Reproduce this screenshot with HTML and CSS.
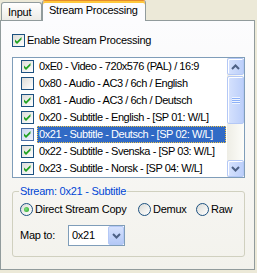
FILE: index.html
```html
<!DOCTYPE html>
<html lang="en">
<head>
    <meta charset="UTF-8">
    <title>Stream Processing</title>
    <link rel="stylesheet" href="styles.css">
</head>
<body>

<div class="tabs">
    <div class="tab">Input</div>
    <div class="tab active">Stream Processing</div>
</div>

<div class="panel">
    <div class="check-row">
        <span class="cb checked"><svg viewBox="0 0 11 11"><polygon points="2,4.5 4,6.5 8.5,2 8.5,4.5 4,9 2,7"/></svg></span>
        <span>Enable Stream Processing</span>
    </div>

    <div class="listbox">
        <ul class="items">
            <li><span class="cb checked"><svg viewBox="0 0 11 11"><polygon points="2,4.5 4,6.5 8.5,2 8.5,4.5 4,9 2,7"/></svg></span><span class="label">0xE0 - Video - 720x576 (PAL) / 16:9</span></li>
            <li><span class="cb"></span><span class="label">0x80 - Audio - AC3 / 6ch / English</span></li>
            <li><span class="cb checked"><svg viewBox="0 0 11 11"><polygon points="2,4.5 4,6.5 8.5,2 8.5,4.5 4,9 2,7"/></svg></span><span class="label">0x81 - Audio - AC3 / 6ch / Deutsch</span></li>
            <li><span class="cb checked"><svg viewBox="0 0 11 11"><polygon points="2,4.5 4,6.5 8.5,2 8.5,4.5 4,9 2,7"/></svg></span><span class="label">0x20 - Subtitle - English - [SP 01: W/L]</span></li>
            <li class="selected"><span class="cb checked"><svg viewBox="0 0 11 11"><polygon points="2,4.5 4,6.5 8.5,2 8.5,4.5 4,9 2,7"/></svg></span><span class="label">0x21 - Subtitle - Deutsch - [SP 02: W/L]</span></li>
            <li><span class="cb checked"><svg viewBox="0 0 11 11"><polygon points="2,4.5 4,6.5 8.5,2 8.5,4.5 4,9 2,7"/></svg></span><span class="label">0x22 - Subtitle - Svenska - [SP 03: W/L]</span></li>
            <li><span class="cb checked"><svg viewBox="0 0 11 11"><polygon points="2,4.5 4,6.5 8.5,2 8.5,4.5 4,9 2,7"/></svg></span><span class="label">0x23 - Subtitle - Norsk - [SP 04: W/L]</span></li>
        </ul>
        <div class="scrollbar">
            <div class="sb-btn"><svg viewBox="0 0 9 6"><polyline points="1,5 4.5,1.5 8,5"/></svg></div>
            <div class="sb-thumb"><span class="grip"></span></div>
            <div class="sb-track"></div>
            <div class="sb-btn"><svg viewBox="0 0 9 6"><polyline points="1,1 4.5,4.5 8,1"/></svg></div>
        </div>
    </div>

    <fieldset class="group">
        <legend>Stream: 0x21 - Subtitle</legend>
        <div class="radios">
            <div class="radio-item"><span class="rb on"></span>Direct Stream Copy</div>
            <div class="radio-item"><span class="rb"></span>Demux</div>
            <div class="radio-item"><span class="rb"></span>Raw</div>
        </div>
        <div class="map-row">
            <span class="map-label">Map to:</span>
            <div class="combo">
                <span class="combo-value">0x21</span>
                <span class="combo-btn"><svg viewBox="0 0 9 6"><polyline points="1,1 4.5,4.5 8,1"/></svg></span>
            </div>
        </div>
    </fieldset>
</div>

</body>
</html>
```

FILE: styles.css
```css
* {
    margin: 0;
    padding: 0;
    box-sizing: border-box;
}

body {
    background-color: #ece9d8;
    font-family: "Liberation Sans", Arial, sans-serif;
    font-size: 11px;
    line-height: 13px;
    letter-spacing: -0.25px;
    color: #000;
    width: 257px;
    height: 273px;
    overflow: hidden;
}

/* tab strip */
.tabs {
    display: flex;
    align-items: flex-end;
    height: 20px;
    padding-left: 1px;
}

.tab {
    width: 41px;
    height: 18px;
    padding: 3px 0 0 6px;
    border: 1px solid #919b9c;
    border-bottom: none;
    border-radius: 3px 3px 0 0;
    background: linear-gradient(#ffffff, #ecebe6);
}

.tab.active {
    position: relative;
    z-index: 1;
    width: 104px;
    height: 21px;
    margin-bottom: -1px;
    padding: 3px 0 0 6px;
    border-top: 1px solid #e68b2c;
    background: #fcfcfe;
    box-shadow: inset 0 2px 0 #ffc83c;
}

/* tab page */
.panel {
    width: 255px;
    height: 250px;
    padding: 13px 0 0 11px;
    border: 1px solid #919b9c;
    background: linear-gradient(#fcfcfe, #f3f2ec);
}

.check-row {
    display: flex;
    align-items: center;
    gap: 2px;
    height: 13px;
}

.cb {
    display: inline-block;
    flex: none;
    width: 13px;
    height: 13px;
    border: 1px solid #1c5180;
    background: linear-gradient(135deg, #dcdcd7, #ffffff);
}

.cb svg {
    display: block;
    width: 11px;
    height: 11px;
    fill: #21a121;
}

/* list with checkboxes */
.listbox {
    display: flex;
    width: 233px;
    height: 121px;
    margin-top: 10px;
    border: 1px solid #7f9db9;
    background: #fff;
}

.items {
    list-style: none;
    width: 214px;
    letter-spacing: -0.45px;
}

.items li {
    display: flex;
    align-items: center;
    height: 17px;
    padding-left: 8px;
}

.items .label {
    width: 189px;
    height: 17px;
    margin-left: 3px;
    padding: 2px 0 0 2px;
    white-space: nowrap;
}

.items li.selected .label {
    background: #316ac5;
    color: #fff;
    outline: 1px dotted #f0c44a;
    outline-offset: -1px;
}

.items li.selected .cb {
    border-color: #4a6fa8;
    background: linear-gradient(135deg, #c9d6ee, #eef2fb);
}

.scrollbar {
    display: flex;
    flex-direction: column;
    width: 17px;
    background: linear-gradient(to right, #eeede5, #fdfdfa);
}

.sb-btn,
.sb-thumb {
    border: 1px solid #b4c8f6;
    border-radius: 2px;
    background: linear-gradient(to right, #d6e2fd, #bccffa);
    box-shadow: inset 1px 1px 0 #ffffff;
}

.sb-btn {
    display: flex;
    align-items: center;
    justify-content: center;
    height: 17px;
}

.sb-btn svg {
    width: 9px;
    height: 6px;
    fill: none;
    stroke: #4d6185;
    stroke-width: 2;
}

.sb-thumb {
    display: flex;
    align-items: center;
    justify-content: center;
    height: 48px;
    margin-top: 1px;
}

.grip {
    width: 8px;
    height: 7px;
    background: repeating-linear-gradient(#eef4fe 0 1px, #8cb0f8 1px 2px);
}

.sb-track {
    flex: 1;
}

/* group box */
.group {
    width: 233px;
    height: 72px;
    margin-top: 7px;
    padding: 0 6px 0 6px;
    border: 1px solid #d0d0bf;
    border-radius: 3px;
}

.group legend {
    padding: 0 1px;
    color: #0046d5;
}

.radios {
    display: grid;
    grid-template-columns: 118px 58px auto;
    margin-top: 5px;
    padding-left: 1px;
}

.radio-item {
    display: flex;
    align-items: center;
    gap: 2px;
    height: 13px;
}

.rb {
    position: relative;
    width: 13px;
    height: 13px;
    border: 1px solid #1c5180;
    border-radius: 50%;
    background: linear-gradient(135deg, #dcdcd7, #ffffff);
}

.rb.on::after {
    content: "";
    position: absolute;
    left: 3px;
    top: 3px;
    width: 5px;
    height: 5px;
    border-radius: 50%;
    background: radial-gradient(circle at 40% 40%, #7ee07e, #21a121);
}

.map-row {
    display: flex;
    align-items: center;
    margin-top: 9px;
    padding-left: 1px;
}

.map-label {
    width: 48px;
}

.combo {
    display: flex;
    width: 57px;
    height: 21px;
    border: 1px solid #7f9db9;
    background: #fff;
}

.combo-value {
    flex: 1;
    padding: 3px 0 0 3px;
}

.combo-btn {
    display: flex;
    align-items: center;
    justify-content: center;
    width: 16px;
    border: 1px solid #b4c8f6;
    border-radius: 2px;
    background: linear-gradient(#d6e2fd, #b4c8f6);
}

.combo-btn svg {
    width: 9px;
    height: 6px;
    fill: none;
    stroke: #4d6185;
    stroke-width: 2;
}
```
